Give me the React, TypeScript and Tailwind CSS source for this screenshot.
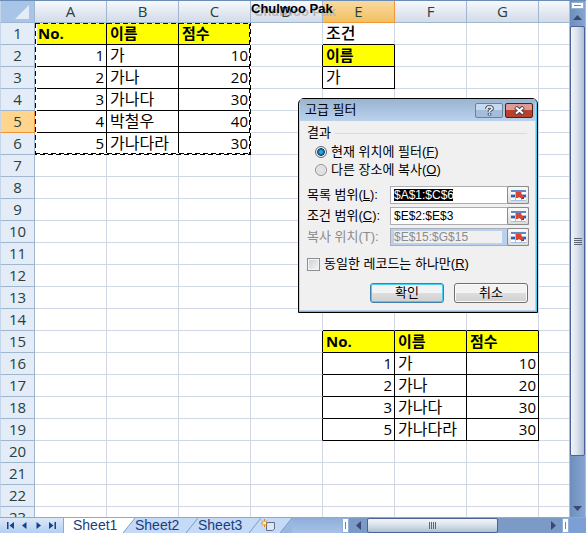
import React, { useState } from 'react'
import clsx from 'clsx'

interface CellData {
  value: string
  align?: 'right'
  heading?: boolean
  plain?: boolean
}

interface RangeFieldProps {
  id: string
  label: string
  hotkey: string
  value: string
  disabled?: boolean
  selected?: boolean
}

const COLUMNS = ['A', 'B', 'C', 'D', 'E', 'F', 'G']
const ROW_COUNT = 23
const ACTIVE_COLUMN = 'E'
const ACTIVE_ROW = 5

const heading = (value: string): CellData => ({ value, heading: true })
const text = (value: string): CellData => ({ value })
const num = (value: string): CellData => ({ value, align: 'right' })

const CELLS: Record<string, CellData> = {
  A1: heading('No.'), B1: heading('이름'), C1: heading('점수'),
  A2: num('1'), B2: text('가'), C2: num('10'),
  A3: num('2'), B3: text('가나'), C3: num('20'),
  A4: num('3'), B4: text('가나다'), C4: num('30'),
  A5: num('4'), B5: text('박철우'), C5: num('40'),
  A6: num('5'), B6: text('가나다라'), C6: num('30'),

  // Criteria range
  E1: { value: '조건', plain: true }, E2: heading('이름'), E3: text('가'),

  // Filter output
  E15: heading('No.'), F15: heading('이름'), G15: heading('점수'),
  E16: num('1'), F16: text('가'), G16: num('10'),
  E17: num('2'), F17: text('가나'), G17: num('20'),
  E18: num('3'), F18: text('가나다'), G18: num('30'),
  E19: num('5'), F19: text('가나다라'), G19: num('30')
}

const isBoxed = (col: number, row: number) => {
  const cell = CELLS[`${COLUMNS[col]}${row}`]
  return Boolean(cell && !cell.plain)
}

function Cell({ col, row }: { col: number; row: number }) {
  const cell = CELLS[`${COLUMNS[col]}${row}`]
  const boxed = isBoxed(col, row)

  return (
    <td
      className={clsx(
        'whitespace-nowrap border-b border-r pb-px pl-[3px] pr-0.5 pt-0 leading-5',
        boxed || isBoxed(col + 1, row) ? 'border-r-black' : 'border-r-[#d0d7e5]',
        boxed || isBoxed(col, row + 1) ? 'border-b-black' : 'border-b-[#d0d7e5]',
        cell?.heading && 'bg-[#ffff00] font-bold',
        cell?.plain && 'font-medium',
        cell?.align === 'right' ? 'text-right' : 'text-left',
        cell && !cell.heading && !cell.align ? 'text-[16px]' : 'text-[15px]'
      )}
    >
      {cell?.value}
    </td>
  )
}

function Sheet() {
  return (
    <table className="w-full table-fixed border-separate border-spacing-0 text-[15px] leading-5">
      <colgroup>
        <col className="w-[35px]" />
        {COLUMNS.map((name) => (
          <col key={name} className="w-[72px]" />
        ))}
        <col />
      </colgroup>
      <thead>
        <tr className="h-[22px] text-[#27413e]">
          <th className="border-b border-l border-r border-[#9eb6ce] border-l-[#c5d6ea] bg-[#a9c4e9] p-0">
            <svg className="ml-auto mr-1 block h-4 w-4" viewBox="0 0 16 16" aria-hidden="true">
              <path d="M15 1V15H1Z" fill="#e4ecf7" />
            </svg>
          </th>
          {COLUMNS.map((name) => (
            <th
              key={name}
              className={clsx(
                'border-b border-r px-0 pb-px pt-0 font-normal',
                name === ACTIVE_COLUMN
                  ? 'border-[#f29536] bg-linear-to-b from-[#f9d99f] to-[#f1c15f]'
                  : 'border-[#9eb6ce] bg-linear-to-b from-[#f6f9fc] to-[#d3dbe9]'
              )}
            >
              {name}
            </th>
          ))}
          <th className="border-b border-[#9eb6ce] bg-linear-to-b from-[#f6f9fc] to-[#d3dbe9] p-0" />
        </tr>
      </thead>
      <tbody>
        {Array.from({ length: ROW_COUNT }, (_, i) => i + 1).map((row) => (
          <tr key={row} className="h-[22px]">
            <th
              scope="row"
              className={clsx(
                'border-b border-l border-r border-l-[#c5d6ea] px-0 pb-px pt-0 font-normal text-[#27413e]',
                row === ACTIVE_ROW
                  ? 'border-b-[#f29536] border-r-[#f29536] bg-[#ffd58d]'
                  : 'border-b-[#9eb6ce] border-r-[#9eb6ce] bg-[#e4ecf7]'
              )}
            >
              {row}
            </th>
            {COLUMNS.map((name, col) => (
              <Cell key={name} col={col} row={row} />
            ))}
            <td className="border-b border-[#d0d7e5] p-0" />
          </tr>
        ))}
      </tbody>
    </table>
  )
}

// Marching ants around the list range A1:C6
function CopyOutline() {
  return (
    <svg
      className="pointer-events-none absolute left-[34px] top-[21px] h-[134px] w-[218px]"
      viewBox="0 0 218 134"
      fill="none"
      shapeRendering="crispEdges"
      aria-hidden="true"
    >
      <path d="M1.5 1.5V132.5M216 1.5V132M1 132H217" stroke="#fff" strokeWidth="2" />
      <path d="M1 1.5H216" stroke="#0000a0" strokeDasharray="5 3" />
      <path d="M1.5 1V132" stroke="#000" strokeDasharray="5 3" />
      <path d="M215.5 2V132" stroke="#000" strokeDasharray="5 3" />
      <path d="M216.5 2V132" stroke="#000" strokeDasharray="5 3" strokeDashoffset="3" />
      <path d="M1 131.5H217" stroke="#000" strokeDasharray="5 3" />
      <path d="M1 132.5H217" stroke="#000" strokeDasharray="5 3" strokeDashoffset="3" />
    </svg>
  )
}

function RangePickerIcon() {
  return (
    <svg width="15" height="11" viewBox="0 0 15 11" shapeRendering="crispEdges" aria-hidden="true">
      <path d="M0 0H15V11H0Z" fill="#fff" />
      <path d="M0 0H15V2H0Z" fill="#6288c4" />
      <path d="M0 4.500H15M0 7.500H15M0 10.500H15M4.500 2V11M10.500 2V11" stroke="#a9bfe0" />
      <path d="M0 5H4V7H0ZM11 5H15V7H11Z" fill="#2f5fae" />
      <path d="M5 2H10V4L13 7L11 9L8 7L6 8H5Z" fill="#dc4432" />
      <path d="M11 8L13 7V9H10Z" fill="#8f231c" />
    </svg>
  )
}

function RangeField({ id, label, hotkey, value, disabled, selected }: RangeFieldProps) {
  return (
    <div className="flex items-center">
      <label htmlFor={id} className={clsx('w-[83px] shrink-0', disabled && 'text-[#8b8b8b]')}>
        {label}({disabled ? hotkey : <u>{hotkey}</u>}):
      </label>
      <div
        className={clsx(
          'flex h-[18px] min-w-0 flex-1 items-center border border-[#abadb3] pl-[3px]',
          disabled ? 'bg-[#b9d1ee]' : 'bg-white'
        )}
      >
        <div className={clsx('flex min-w-0 flex-1', disabled && 'mr-[5px] bg-[#f0f0f0]')}>
          <input
            id={id}
            type="text"
            defaultValue={value}
            disabled={disabled}
            size={10}
            className={clsx(
              'h-3 min-w-0 text-xs leading-3 outline-none',
              disabled && 'text-[#8b8b8b]',
              selected ? 'w-[59px] flex-none bg-black text-white' : 'flex-1'
            )}
          />
        </div>
        <button
          type="button"
          aria-label={`${label} 선택`}
          className="-mr-px flex h-[18px] w-[22px] shrink-0 items-center justify-center rounded-xs border border-[#8a8a8a] bg-linear-to-b from-[#fafafa] to-[#dcdcdc]"
        >
          <RangePickerIcon />
        </button>
      </div>
    </div>
  )
}

function AdvancedFilterDialog() {
  const [mode, setMode] = useState('inplace')

  const radioClass =
    'size-3 shrink-0 appearance-none rounded-full border border-[#8e8f8f] bg-radial from-[#e8e8e8] to-[#cfd2d4] shadow-[inset_0_0_0_1px_#f4f4f4] checked:border-[#5b6b78] checked:bg-radial checked:from-[#2aa7dc] checked:from-20% checked:via-[#0c3a66] checked:via-50% checked:to-[#dfe5ea] checked:to-60%'
  const actionClass =
    'h-5 w-[74px] rounded-[3px] border bg-linear-to-b from-[#f3f3f3] from-50% via-[#dedede] via-50% to-[#d0d0d0] text-center leading-4'

  return (
    <div
      role="dialog"
      aria-labelledby="filter-title"
      className="absolute left-[298px] top-[97px] w-[240px] rounded-t-md border border-black bg-[#b9d1ea] text-[13px] leading-4"
    >
      <div className="rounded-t-[5px] border-b border-r border-[#4fc8e8] px-px pb-px">
        <div className="flex h-[22px] items-center gap-0.5 bg-linear-to-b from-[#9ab4d1] to-[#bad2ec] pl-[5px] pr-0.5">
          <h2 id="filter-title" className="flex-1">고급 필터</h2>
          <button
            type="button"
            aria-label="도움말"
            className="flex h-[15px] w-7 items-center justify-center rounded-xs border border-[#6d8299] bg-linear-to-b from-[#c7d9ee] from-50% to-[#a3bddb] to-50%"
          >
            <svg width="9" height="11" viewBox="0 0 9 11" fill="none" aria-hidden="true">
              <path d="M2 4V3L3 2H6L7 3V4L4.500 6V7" stroke="#44505f" strokeWidth="3.500" />
              <path d="M4.500 8V10.500" stroke="#44505f" strokeWidth="3.500" />
              <path d="M2 4V3L3 2H6L7 3V4L4.500 6V7M4.500 8.500V10" stroke="#fff" strokeWidth="1.500" />
            </svg>
          </button>
          <button
            type="button"
            aria-label="닫기"
            className="flex h-[15px] w-7 items-center justify-center rounded-xs border border-[#571c20] bg-linear-to-b from-[#dc9b93] from-50% to-[#b8402c] to-50%"
          >
            <svg width="11" height="9" viewBox="0 0 11 9" fill="none" aria-hidden="true">
              <path d="M1.500 1L9.500 8M9.500 1L1.500 8" stroke="#54444c" strokeWidth="4" />
              <path d="M2 1.500L9 7.500M9 1.500L2 7.500" stroke="#fff" strokeWidth="2" />
            </svg>
          </button>
        </div>

        <form className="bg-[#f0f0f0] pb-[7px] pl-[7px] pr-1.5 pt-1" onSubmit={(e) => e.preventDefault()}>
          <fieldset>
            <legend className="flex w-full items-center gap-1">
              결과
              <span className="mr-0.5 h-px flex-1 bg-[#d0dfea]" />
            </legend>
            <div className="flex flex-col gap-0.5 pl-2 pt-[3px]">
              <label className="flex items-center gap-1">
                <input
                  type="radio"
                  name="mode"
                  className={radioClass}
                  checked={mode === 'inplace'}
                  onChange={() => setMode('inplace')}
                />
                <span>현재 위치에 필터(<u>F</u>)</span>
              </label>
              <label className="flex items-center gap-1">
                <input
                  type="radio"
                  name="mode"
                  className={radioClass}
                  checked={mode === 'copy'}
                  onChange={() => setMode('copy')}
                />
                <span>다른 장소에 복사(<u>O</u>)</span>
              </label>
            </div>
          </fieldset>

          <div className="mt-2 flex flex-col gap-[3px]">
            <RangeField id="list-range" label="목록 범위" hotkey="L" value="$A$1:$C$6" selected />
            <RangeField id="criteria-range" label="조건 범위" hotkey="C" value="$E$2:$E$3" />
            <RangeField id="copy-to" label="복사 위치" hotkey="T" value="$E$15:$G$15" disabled={mode !== 'copy'} />
          </div>

          <label className="mt-2.5 flex items-center gap-1">
            <input
              type="checkbox"
              className="size-[13px] shrink-0 appearance-none border border-[#8e8f8f] bg-linear-to-br from-[#cbcfd5] to-[#f6f6f6] shadow-[inset_0_0_0_1px_#f4f4f4] checked:bg-[#2a6ea8]"
            />
            <span>동일한 레코드는 하나만(<u>R</u>)</span>
          </label>

          <div className="mt-[11px] flex justify-end gap-2.5 pr-px">
            <button type="submit" className={clsx(actionClass, 'border-[#3c7fb1] shadow-[inset_0_0_0_1px_#48d0f4]')}>
              확인
            </button>
            <button type="button" className={clsx(actionClass, 'border-[#707070] shadow-[inset_0_0_0_1px_#fafafa]')}>
              취소
            </button>
          </div>
        </form>
      </div>
    </div>
  )
}

function VerticalScroll() {
  return (
    <div className="flex w-[17px] shrink-0 flex-col items-stretch border-l border-r border-[#a3bfe2] bg-linear-to-r from-[#6e8fbb] to-[#84a5d0]">
      <div className="mx-px mt-px flex h-[7px] items-center justify-center border border-[#8fb2dc] bg-white">
        <div className="h-px w-[7px] bg-[#5c8ac4]" />
      </div>
      <button type="button" aria-label="Scroll up" className="flex h-[17px] items-center justify-center">
        <svg width="9" height="5" viewBox="0 0 9 5" aria-hidden="true"><path d="M4.500 0L9 5H0Z" fill="#3b4871" /></svg>
      </button>
      <div className="flex flex-[430] flex-col items-center justify-center gap-px rounded-xs border border-[#4c6397] bg-linear-to-r from-[#f2f5f9] via-[#dbe3ec] via-45% to-[#adc0d6]">
        <div className="h-px w-2 bg-[#5c6677]" />
        <div className="h-px w-2 bg-[#5c6677]" />
        <div className="h-px w-2 bg-[#5c6677]" />
        <div className="h-px w-2 bg-[#5c6677]" />
      </div>
      <div className="flex-[44]" />
      <button type="button" aria-label="Scroll down" className="flex h-[17px] items-center justify-center">
        <svg width="9" height="5" viewBox="0 0 9 5" aria-hidden="true"><path d="M0 0H9L4.500 5Z" fill="#3b4871" /></svg>
      </button>
    </div>
  )
}

const NAV_BUTTONS = [
  { label: 'First sheet', path: 'M1 1H2.500V8H1ZM8 1V8L3.500 4.500Z' },
  { label: 'Previous sheet', path: 'M6.500 1V8L2 4.500Z' },
  { label: 'Next sheet', path: 'M2.500 1V8L7 4.500Z' },
  { label: 'Last sheet', path: 'M1 1V8L5.500 4.500ZM6.500 1H8V8H6.500Z' }
]

// Slanted edge that joins one tab to the next
function TabEdge({ left, right }: { left: string; right: string }) {
  return (
    <svg width="12" height="15" viewBox="0 0 12 15" className="shrink-0" aria-hidden="true">
      <path d="M0 0H12V15H0Z" fill={right} />
      <path d="M0 0H12L0 15Z" fill={left} />
      <path d="M12 0L0 15" stroke="#7f9cc4" />
    </svg>
  )
}

function BottomBar() {
  return (
    <footer className="flex h-4 shrink-0 items-stretch border-t border-[#8ea9cc] bg-linear-to-b from-[#8fafd9] to-[#a6c2e8] font-['Liberation_Sans',sans-serif] text-sm leading-[15px] text-[#1b3c7d]">
      <div className="flex w-16 shrink-0 items-center justify-around border-r border-[#8ea9cc] bg-linear-to-b from-[#dbe8f8] to-[#b4cff2] px-[3px]">
        {NAV_BUTTONS.map((item) => (
          <button key={item.label} type="button" aria-label={item.label}>
            <svg width="9" height="9" viewBox="0 0 9 9" aria-hidden="true"><path d={item.path} fill="#15428b" /></svg>
          </button>
        ))}
      </div>
      <div className="flex min-w-0 shrink-0 items-stretch">
        <button type="button" className="w-[59px] bg-white pl-[9px] text-left">Sheet1</button>
        <TabEdge left="#ffffff" right="#c4daf6" />
        <button type="button" className="w-[51px] bg-[#c4daf6] text-left">Sheet2</button>
        <TabEdge left="#c4daf6" right="#c4daf6" />
        <button type="button" className="w-[51px] bg-[#c4daf6] text-left">Sheet3</button>
        <TabEdge left="#c4daf6" right="#c4daf6" />
        <button type="button" aria-label="Insert sheet" className="flex w-[19px] items-center bg-[#c4daf6]">
          <svg width="15" height="13" viewBox="0 0 15 13" fill="none" aria-hidden="true">
            <path d="M5.500 3.500H13.500V10L11.500 11.500H5.500Z" fill="#dfe6f2" stroke="#5f6f8c" />
            <path d="M3.500 0V8M0 4H7M1 1.500L6 6.500M6 1.500L1 6.500" stroke="#e08a12" />
            <circle cx="3.500" cy="4" r="1.500" fill="#fff4c4" />
          </svg>
        </button>
        <TabEdge left="#c4daf6" right="#9ab8df" />
      </div>
      <div className="min-w-0 flex-1" />
      <div className="flex w-[244px] shrink-0 items-stretch bg-[#7b9bc6]">
        <div className="flex w-[7px] items-center justify-center border border-[#8fb2dc] bg-white">
          <div className="h-[7px] w-px bg-[#5c8ac4]" />
        </div>
        <button type="button" aria-label="Scroll left" className="flex w-[18px] items-center justify-center">
          <svg width="5" height="9" viewBox="0 0 5 9" aria-hidden="true"><path d="M5 0V9L0 4.500Z" fill="#3b4871" /></svg>
        </button>
        <div className="flex w-[131px] items-center justify-center gap-px rounded-xs border border-[#4c6397] bg-linear-to-b from-[#f2f5f9] via-[#dbe3ec] via-45% to-[#adc0d6]">
          <div className="h-[7px] w-px bg-[#5c6677]" />
          <div className="h-[7px] w-px bg-[#5c6677]" />
          <div className="h-[7px] w-px bg-[#5c6677]" />
          <div className="h-[7px] w-px bg-[#5c6677]" />
        </div>
        <div className="flex-1" />
        <button type="button" aria-label="Scroll right" className="flex w-[18px] items-center justify-center">
          <svg width="5" height="9" viewBox="0 0 5 9" aria-hidden="true"><path d="M0 0V9L5 4.500Z" fill="#3b4871" /></svg>
        </button>
        <div className="flex w-[7px] items-center justify-center border border-[#8fb2dc] bg-white">
          <div className="h-[7px] w-px bg-[#5c8ac4]" />
        </div>
        <div className="w-[17px] bg-[#7d9fd3]" />
      </div>
    </footer>
  )
}

export default function App() {
  return (
    <div className="flex h-screen flex-col overflow-hidden border-t border-[#6b8cb5] bg-white font-['Open_Sans','Noto_Sans_CJK_KR',sans-serif] text-black">
      <div className="flex min-h-0 flex-1">
        <main className="relative min-w-0 flex-1 overflow-hidden">
          <Sheet />
          <CopyOutline />
          <div className="absolute left-[251px] top-0 font-['Liberation_Sans',sans-serif] text-[13px] font-bold leading-4 [text-shadow:3px_3px_0_#b8b8b8]">
            Chulwoo Pak
          </div>
          <div className="font-['Liberation_Sans','Noto_Sans_CJK_KR',sans-serif]">
            <AdvancedFilterDialog />
          </div>
        </main>
        <VerticalScroll />
      </div>
      <BottomBar />
    </div>
  )
}
